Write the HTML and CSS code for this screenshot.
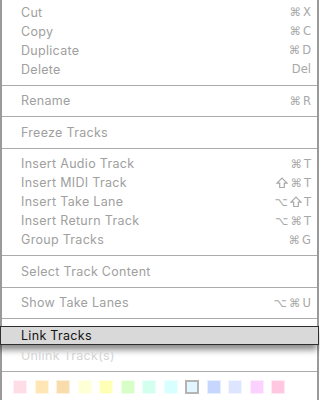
FILE: index.html
```html
<!DOCTYPE html>
<html lang="en">
<head>
    <meta charset="UTF-8">
    <meta name="viewport" content="width=device-width, initial-scale=1.0">
    <title>Track Context Menu</title>
    <link rel="stylesheet" href="styles.css">
</head>
<body>
    <div class="menu">
        <div class="section first">
            <div class="item"><span>Cut</span><span class="keys"><i>⌘</i><i>X</i></span></div>
            <div class="item"><span>Copy</span><span class="keys"><i>⌘</i><i>C</i></span></div>
            <div class="item"><span>Duplicate</span><span class="keys"><i>⌘</i><i>D</i></span></div>
            <div class="item"><span>Delete</span><span class="keys"><i>Del</i></span></div>
        </div>
        <div class="section">
            <div class="item"><span>Rename</span><span class="keys"><i>⌘</i><i>R</i></span></div>
        </div>
        <div class="section">
            <div class="item"><span>Freeze Tracks</span></div>
        </div>
        <div class="section">
            <div class="item"><span>Insert Audio Track</span><span class="keys"><i>⌘</i><i>T</i></span></div>
            <div class="item"><span>Insert MIDI Track</span><span class="keys">
                <svg class="shift" viewBox="0 0 12 12"><path d="M6 1.2 L11 6.2 H8.3 V10.5 H3.7 V6.2 H1 Z"/></svg><i>⌘</i><i>T</i></span></div>
            <div class="item"><span>Insert Take Lane</span><span class="keys"><i>⌥</i>
                <svg class="shift" viewBox="0 0 12 12"><path d="M6 1.2 L11 6.2 H8.3 V10.5 H3.7 V6.2 H1 Z"/></svg><i>T</i></span></div>
            <div class="item"><span>Insert Return Track</span><span class="keys"><i>⌥</i><i>⌘</i><i>T</i></span></div>
            <div class="item"><span>Group Tracks</span><span class="keys"><i>⌘</i><i>G</i></span></div>
        </div>
        <div class="section">
            <div class="item"><span>Select Track Content</span></div>
        </div>
        <div class="section">
            <div class="item"><span>Show Take Lanes</span><span class="keys"><i>⌥</i><i>⌘</i><i>U</i></span></div>
        </div>
        <div class="section">
            <div class="item active"><span>Link Tracks</span></div>
            <div class="item faint"><span>Unlink Track(s)</span></div>
        </div>
        <div class="section swatches">
            <span class="swatch" style="background: #ffdde6;"></span>
            <span class="swatch" style="background: #ffe6b4;"></span>
            <span class="swatch" style="background: #f8dcac;"></span>
            <span class="swatch" style="background: #ffffd6;"></span>
            <span class="swatch" style="background: #ffffb6;"></span>
            <span class="swatch" style="background: #d6fec6;"></span>
            <span class="swatch" style="background: #d2ffee;"></span>
            <span class="swatch" style="background: #d8ffff;"></span>
            <span class="swatch picked" style="background: #e2f6ff;"></span>
            <span class="swatch" style="background: #c6d6ff;"></span>
            <span class="swatch" style="background: #dee6ff;"></span>
            <span class="swatch" style="background: #fbd2ff;"></span>
            <span class="swatch" style="background: #ffc8e0;"></span>
        </div>
    </div>
</body>
</html>
```

FILE: styles.css
```css
body {
    margin: 0;
    width: 320px;
    height: 400px;
    overflow: hidden;
    background: #ffffff;
    font-family: Inter, "DejaVu Sans", sans-serif;
    font-size: 12.5px;
}
.menu {
    background: #ffffff;
    border-left: 2px solid #9a9a9a;
    border-right: 2px solid #9a9a9a;
    margin-right: 1px;
    height: 400px;
}
.section {
    padding: 5.5px 0 6px;
    border-top: 1px solid #ababab;
}
.section.first {
    border-top: none;
    padding-top: 2.5px;
}
.item {
    display: flex;
    justify-content: space-between;
    align-items: center;
    height: 19px;
    padding: 0 6px 0 19px;
    color: #a0a0a0;
    letter-spacing: 0.3px;
}
.keys {
    display: flex;
    align-items: center;
    gap: 2px;
    color: #a8a8a8;
    font-family: "DejaVu Sans", sans-serif;
    font-size: 11.5px;
    letter-spacing: 0;
}
.keys i {
    font-style: normal;
}
.shift {
    width: 12px;
    height: 12px;
    fill: none;
    stroke: #a8a8a8;
    stroke-width: 1.2;
    stroke-linejoin: miter;
}
.item.active {
    height: 17px;
    margin: 1px -2px;
    padding-left: 20px;
    background: #d9d9d9;
    border: 1px solid #2e2e2e;
    color: #141414;
    box-shadow: -2px 5px 6px rgba(0, 0, 0, 0.45);
}
.item.faint {
    color: #d4d4d4;
}
.swatches {
    display: flex;
    gap: 7.5px;
    padding: 8px 0 0 11px;
}
.swatch {
    width: 14px;
    height: 14px;
    box-sizing: border-box;
    border: 1px solid rgba(255, 255, 255, 0.6);
}
.swatch.picked {
    border: 2px solid #b4b4b4;
}
```
